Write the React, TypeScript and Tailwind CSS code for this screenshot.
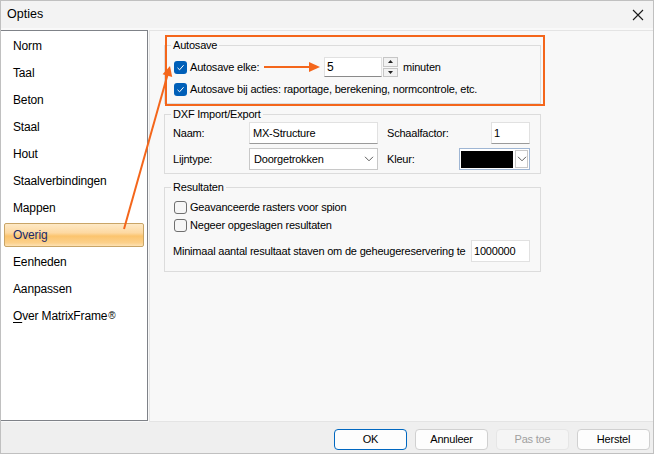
import React from "react";

const FONT = { fontFamily: '"Liberation Sans", Arial, sans-serif' };

const navItems = [
  "Norm",
  "Taal",
  "Beton",
  "Staal",
  "Hout",
  "Staalverbindingen",
  "Mappen",
  "Overig",
  "Eenheden",
  "Aanpassen",
];

function CheckBox({ checked }: { checked: boolean }) {
  if (checked) {
    return (
      <span className="ml-[1px] flex h-[13px] w-[13px] shrink-0 items-center justify-center rounded-[3px] bg-[#005fb8]">
        <svg width="9" height="9" viewBox="0 0 9 9">
          <path d="M1.5 4.8 L3.6 6.8 L7.6 2.2" fill="none" stroke="#ffffff" strokeWidth="1" />
        </svg>
      </span>
    );
  }
  return (
    <span className="ml-[1px] block h-[13px] w-[13px] shrink-0 rounded-[3px] border border-[#6f6f6f] bg-[#f6f6f6]" />
  );
}

function Chevron() {
  return (
    <svg width="10" height="6" viewBox="0 0 10 6">
      <path d="M1 0.8 L5 4.8 L9 0.8" fill="none" stroke="#5c5c5c" strokeWidth="1" />
    </svg>
  );
}

function Group({ title, children, className }: { title: string; children: React.ReactNode; className?: string }) {
  return (
    <fieldset className={`w-[377px] border border-[#dcdcdc] pl-[8px] ${className ?? ""}`}>
      <legend className="ml-[-2px] px-[2px] leading-[15px]">{title}</legend>
      {children}
    </fieldset>
  );
}

function FooterButton({ label, primary, disabled }: { label: string; primary?: boolean; disabled?: boolean }) {
  const cls = primary
    ? "border-[#0067c0] bg-[#fdfdfd] text-black"
    : disabled
    ? "border-[#e6e6e6] bg-[#f5f5f5] text-[#a0a0a0]"
    : "border-[#d0d0d0] bg-[#fdfdfd] text-black";
  return (
    <div className={`flex h-[21px] w-[73px] items-center justify-center rounded-[4px] border ${cls}`}>
      {label}
    </div>
  );
}

export default function App() {
  return (
    <div
      className="relative flex h-[454px] w-[654px] flex-col overflow-hidden border border-[#c0c0c0] bg-[#f9f9f9] text-[12px] text-black"
      style={FONT}
    >
      {/* title bar */}
      <div className="flex h-[27px] shrink-0 items-center justify-between bg-[#f3f3f3] pl-[6px] pr-[9px]">
        <span className="text-[12.5px]">Opties</span>
        <svg width="12" height="12" viewBox="0 0 12 12">
          <path d="M1 1 L11 11 M11 1 L1 11" stroke="#1a1a1a" strokeWidth="1.1" />
        </svg>
      </div>

      {/* body */}
      <div className="flex flex-1 pt-[2px]">
        {/* category list */}
        <div className="ml-[-1px] flex h-[391px] w-[148px] shrink-0 flex-col gap-[3px] border border-[#7f8288] bg-white px-[3px] pt-[3px] tracking-[-0.15px]">
          {navItems.map((item) =>
            item === "Overig" ? (
              <div
                key={item}
                className="flex h-[24px] items-center rounded-[2px] border border-[#c9a567] pl-[8px] text-[#1b2a6b]"
                style={{
                  background:
                    "linear-gradient(to bottom, #fee9c6 0%, #fdd9a2 40%, #fbc46e 55%, #fcd08a 85%, #fde2b4 100%)",
                }}
              >
                {item}
              </div>
            ) : (
              <div key={item} className="flex h-[24px] items-center pl-[9px]">
                {item}
              </div>
            )
          )}
          <div className="flex h-[24px] items-center pl-[9px]">
            <span className="underline decoration-1 underline-offset-[2px]">O</span>
            <span>ver MatrixFrame</span>
            <span className="ml-[1px] text-[10px] leading-none">®</span>
          </div>
        </div>

        {/* settings panel */}
        <div className="ml-[1px] flex h-[392px] flex-1 flex-col border border-r-0 border-[#e4e4e4] bg-[#f8f8f8] pl-[14px] pt-[7px] text-[11px] tracking-[-0.2px]">
          <Group title="Autosave" className="pb-[4px]">
            <div className="mt-[4px] flex h-[20px] items-center">
              <CheckBox checked />
              <span className="ml-[3px] w-[134px]">Autosave elke:</span>
              <div className="flex h-[20px] w-[58px] items-center border border-b-[#8a8a8a] border-[#e1e1e1] bg-white pl-[2px] text-[12px]">
                5
              </div>
              <div className="ml-[1px] flex h-[20px] w-[15px] flex-col gap-[1px]">
                <div className="flex h-[9.5px] items-center justify-center border border-[#c6c6c6] bg-[#f2f2f2]">
                  <svg width="5" height="3" viewBox="0 0 5 3">
                    <path d="M0 3 L2.5 0 L5 3 Z" fill="#222" />
                  </svg>
                </div>
                <div className="flex h-[9.5px] items-center justify-center border border-[#c6c6c6] bg-[#f2f2f2]">
                  <svg width="5" height="3" viewBox="0 0 5 3">
                    <path d="M0 0 L2.5 3 L5 0 Z" fill="#222" />
                  </svg>
                </div>
              </div>
              <span className="ml-[5px]">minuten</span>
            </div>
            <div className="mt-[2px] flex h-[20px] items-center">
              <CheckBox checked />
              <span className="ml-[3px] whitespace-nowrap">Autosave bij acties: raportage, berekening, normcontrole, etc.</span>
            </div>
          </Group>

          <Group title="DXF Import/Export" className="mt-[3px] pb-[3px]">
            <div className="flex h-[22px] items-center">
              <span className="w-[76px]">Naam:</span>
              <div className="flex h-[22px] w-[129px] items-center border border-b-[#9a9a9a] border-[#e1e1e1] bg-white pl-[3px]">
                MX-Structure
              </div>
              <span className="ml-[9px] w-[104px]">Schaalfactor:</span>
              <div className="flex h-[22px] w-[39px] items-center border border-b-[#9a9a9a] border-[#e1e1e1] bg-white pl-[2px]">
                1
              </div>
            </div>
            <div className="mt-[4px] flex h-[22px] items-center">
              <span className="w-[76px]">Lijntype:</span>
              <div className="flex h-[22px] w-[129px] items-center justify-between border border-[#c8c8c8] bg-white pl-[4px] pr-[3px]">
                <span>Doorgetrokken</span>
                <Chevron />
              </div>
              <span className="ml-[9px] w-[72px]">Kleur:</span>
              <div className="flex h-[22px] w-[71px] items-center border border-[#9fb6d4] bg-white p-[1px]">
                <div className="h-[17px] w-[52px] bg-black" />
                <div className="ml-[2px] flex h-[18px] flex-1 items-center justify-center border border-[#c8c8c8] bg-white">
                  <Chevron />
                </div>
              </div>
            </div>
          </Group>

          <Group title="Resultaten" className="mt-[6px] pb-[9px]">
            <div className="mt-[3px] flex h-[18px] items-center">
              <CheckBox checked={false} />
              <span className="ml-[3px]">Geavanceerde rasters voor spion</span>
            </div>
            <div className="flex h-[18px] items-center">
              <CheckBox checked={false} />
              <span className="ml-[3px]">Negeer opgeslagen resultaten</span>
            </div>
            <div className="mt-[6px] flex h-[22px] items-center">
              <span className="w-[298px] whitespace-nowrap">Minimaal aantal resultaat staven om de geheugereservering te</span>
              <div className="flex h-[22px] w-[59px] items-center border border-[#e1e1e1] bg-white pl-[2px]">
                1000000
              </div>
            </div>
          </Group>
        </div>
      </div>

      {/* button bar */}
      <div className="flex h-[32px] shrink-0 items-start justify-end gap-[8px] bg-[#efefef] pr-[3px] pt-[7px] text-[11px] tracking-[-0.2px]">
        <FooterButton label="OK" primary />
        <FooterButton label="Annuleer" />
        <FooterButton label="Pas toe" disabled />
        <FooterButton label="Herstel" />
      </div>

      {/* annotation arrows */}
      <svg className="pointer-events-none absolute left-[-1px] top-[-1px]" width="654" height="454" viewBox="0 0 654 454">
        <rect x="166" y="36" width="378" height="69" fill="none" stroke="#f4661b" strokeWidth="2" />
        <line x1="124" y1="229" x2="167.5" y2="75" stroke="#f4661b" strokeWidth="2" />
        <polygon points="170,66 162.6,74.3 172.2,77" fill="#f4661b" />
        <line x1="264" y1="67" x2="310" y2="67" stroke="#f4661b" strokeWidth="2" />
        <polygon points="320,67 309,62 309,72" fill="#f4661b" />
      </svg>
    </div>
  );
}
